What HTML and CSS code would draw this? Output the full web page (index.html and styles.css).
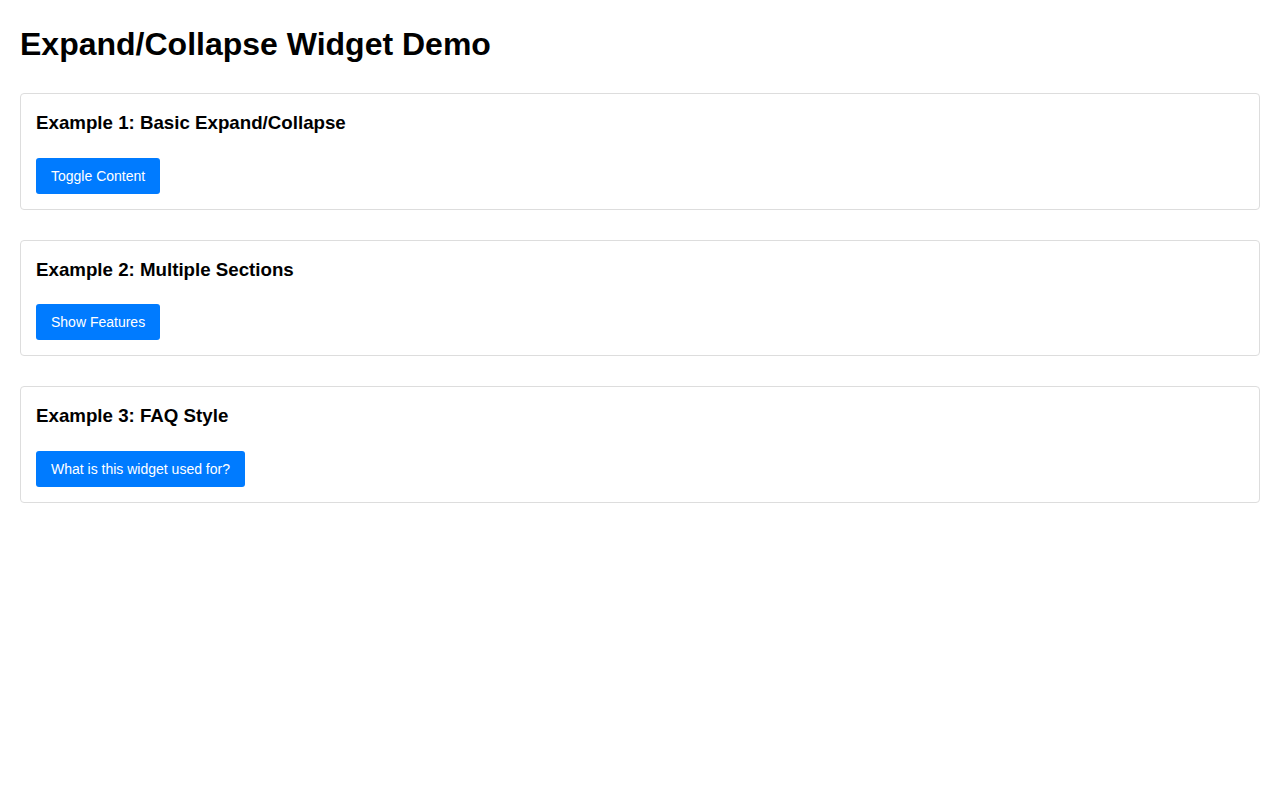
FILE: index.html
```html
<!DOCTYPE html>
<html>
<head>
<meta charset="utf-8">
<title>Expand/Collapse Widget Demo</title>
<link rel="stylesheet" href="styles.css">
</head>
<body>
<h1 class="title">Expand/Collapse Widget Demo</h1>
<div class="card">
  <h3 class="card-title">Example 1: Basic Expand/Collapse</h3>
  <button class="btn">Toggle Content</button>
</div>
<div class="card">
  <h3 class="card-title">Example 2: Multiple Sections</h3>
  <button class="btn">Show Features</button>
</div>
<div class="card">
  <h3 class="card-title">Example 3: FAQ Style</h3>
  <button class="btn">What is this widget used for?</button>
</div>
</body>
</html>
```

FILE: styles.css
```css
body {
  margin: 0;
  padding: 20px;
  font-family: "Liberation Sans", Arial, sans-serif;
  line-height: 1.5;
  color: #000;
  background: #fff;
}
.title {
  font-size: 32px;
  margin: 0 0 25px 0;
  line-height: 1.5;
}
.card {
  border: 1px solid #ddd;
  border-radius: 4px;
  padding: 15px;
  margin-bottom: 30px;
  display: flex;
  flex-direction: column;
  align-items: flex-start;
}
.card-title {
  font-size: 18.72px;
  margin: 0 0 20px 0;
  line-height: 28.5px;
}
.btn {
  font-family: "Liberation Sans", Arial, sans-serif;
  font-size: 14px;
  line-height: 16px;
  padding: 10px 15px;
  background: #007bff;
  color: #fff;
  border: none;
  border-radius: 3px;
}
```
